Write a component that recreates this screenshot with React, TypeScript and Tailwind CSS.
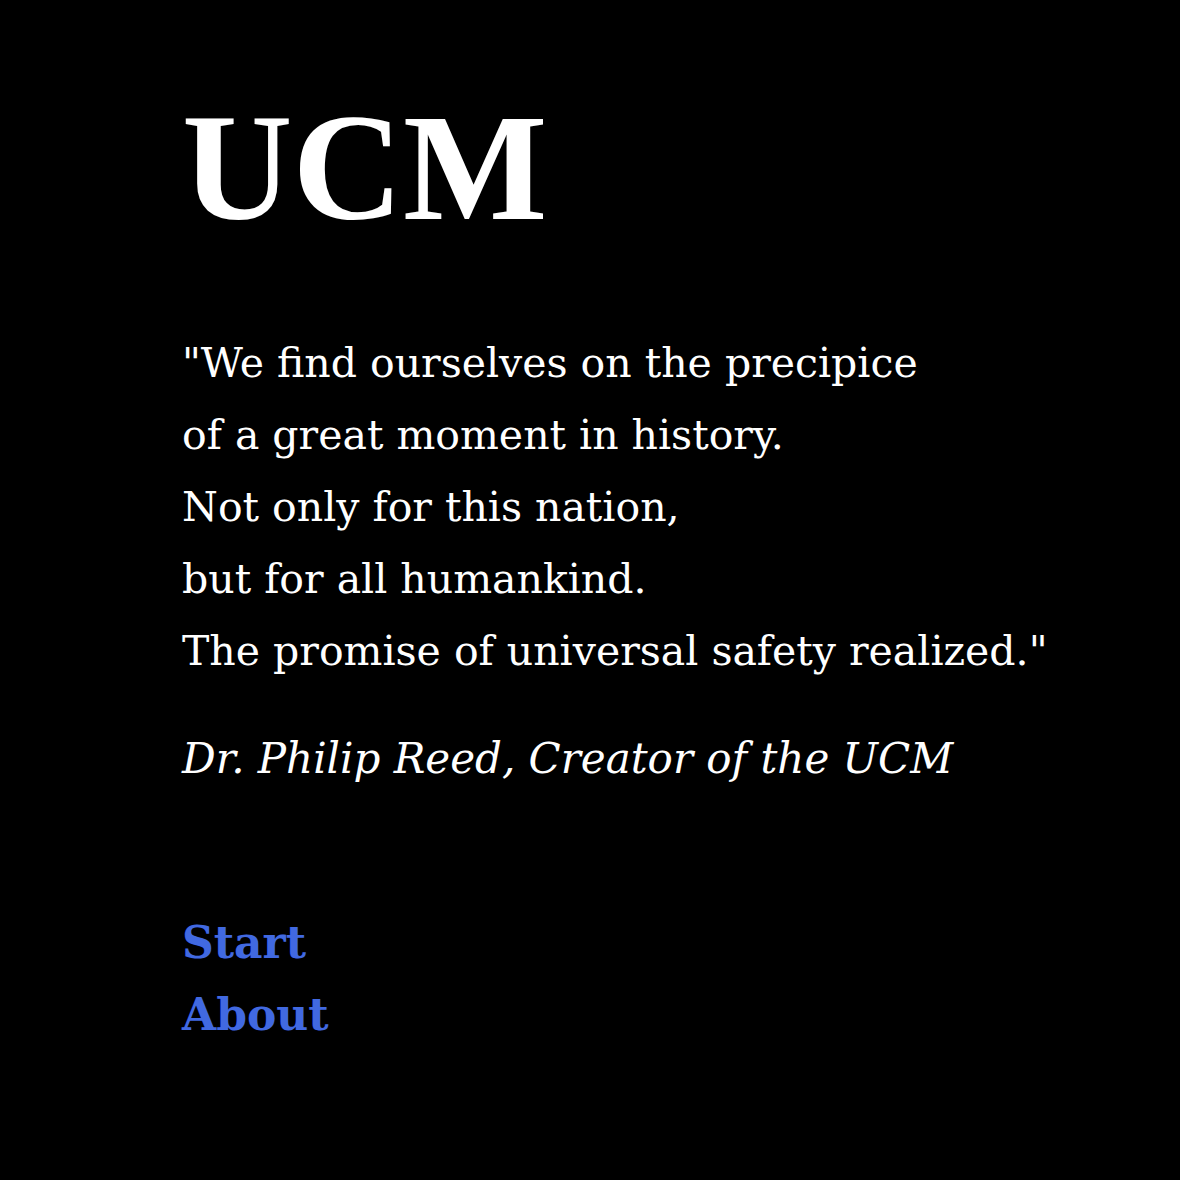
export default function App() {
  return (
    <div className="min-h-[1180px] w-full bg-black text-white font-['DejaVu_Serif',Georgia,serif]">
      <main className="pl-[182px] pt-[91px]">
        <h1 className="font-['Liberation_Serif',Georgia,serif] text-[153px] font-bold leading-none">UCM</h1>
        <blockquote className="mt-[83px] text-[41px] leading-[72px]">
          <p>"We find ourselves on the precipice</p>
          <p>of a great moment in history.</p>
          <p>Not only for this nation,</p>
          <p>but for all humankind.</p>
          <p>The promise of universal safety realized."</p>
        </blockquote>
        <p className="mt-[36px] text-[42px] italic leading-[72px]">Dr. Philip Reed, Creator of the UCM</p>
        <nav className="mt-[112px] flex flex-col">
          <a href="#" className="text-[44px] font-bold leading-[72px] text-[#4169e1]">Start</a>
          <a href="#" className="text-[44px] font-bold leading-[71px] text-[#4169e1]">About</a>
        </nav>
      </main>
    </div>
  );
}
